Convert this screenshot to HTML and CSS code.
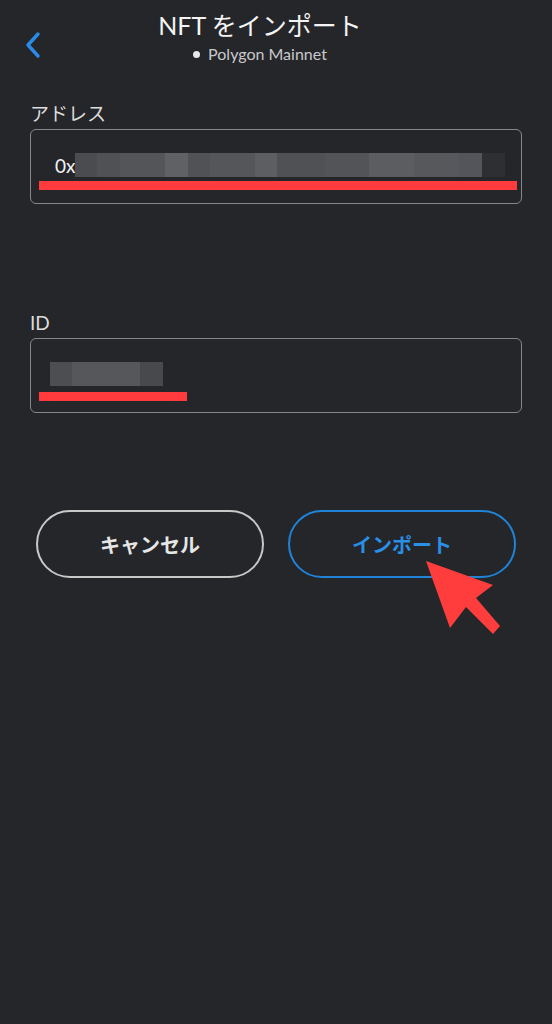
FILE: index.html
```html
<!DOCTYPE html>
<html lang="ja">
<head>
  <meta charset="UTF-8" />
  <meta name="viewport" content="width=device-width, initial-scale=1.0">
  <title>NFT をインポート</title>
  <link rel="stylesheet" href="styles.css">
</head>
<body>
  <header class="top-bar">
    <button class="back-btn" aria-label="戻る">
      <svg width="18" height="28" viewBox="0 0 18 28">
        <path d="M14 3 L4 14 L14 25" fill="none" stroke="#2a8ce8" stroke-width="3.4" stroke-linecap="round" stroke-linejoin="round"/>
      </svg>
    </button>
    <div class="title-block">
      <h1 class="title">NFT をインポート</h1>
      <div class="network"><span class="dot"></span>Polygon Mainnet</div>
    </div>
  </header>

  <main class="form">
    <div class="field">
      <label class="field-label">アドレス</label>
      <div class="field-box address-box">
        <div class="value-row">
          <span class="prefix">0x</span>
          <span class="blur blur-address"></span>
        </div>
        <div class="mark mark-address"></div>
      </div>
    </div>

    <div class="field field-id">
      <label class="field-label">ID</label>
      <div class="field-box id-box">
        <div class="value-row">
          <span class="blur blur-id"></span>
        </div>
        <div class="mark mark-id"></div>
      </div>
    </div>

    <div class="actions">
      <button class="btn btn-cancel">キャンセル</button>
      <div class="btn-wrap">
        <button class="btn btn-import">インポート</button>
        <svg class="pointer" width="80" height="80" viewBox="0 0 80 80">
          <path d="M1 1 L68 25 L51 38 L75 66 L68 74 L41 47 L25 68 Z" fill="#ff3d3d"/>
        </svg>
      </div>
    </div>
  </main>
</body>
</html>
```

FILE: styles.css
```css
body {
  margin: 0;
  background: #25262a;
  color: #fff;
  font-family: Lato, "Noto Sans CJK JP", sans-serif;
  min-height: 1024px;
}
.top-bar {
  position: relative;
  height: 80px;
  display: flex;
  justify-content: center;
  padding-right: 32px;
}
.back-btn {
  position: absolute;
  left: 24px;
  top: 31px;
  background: none;
  border: none;
  padding: 0;
  cursor: pointer;
}
.title-block {
  text-align: center;
  padding-top: 9px;
}
.title {
  margin: 0;
  font-size: 25px;
  font-weight: 400;
  line-height: 32px;
  color: #f4f4f4;
}
.network {
  font-size: 16px;
  color: #c9c9cb;
  line-height: 20px;
  margin-top: 3px;
  display: flex;
  align-items: center;
  justify-content: center;
  gap: 8px;
}
.dot {
  width: 7px;
  height: 7px;
  border-radius: 50%;
  background: #e8e8e8;
}
.form {
  padding: 20px 30px 0 30px;
}
.field-label {
  display: block;
  font-size: 19px;
  color: #dcdcdc;
  line-height: 28px;
  margin-bottom: 1px;
}
.field-box {
  border: 1.5px solid #86878b;
  border-radius: 6px;
  height: 75px;
  box-sizing: border-box;
  padding: 23px 4px 0 8px;
}
.value-row {
  display: flex;
  align-items: flex-end;
  height: 24px;
}
.prefix {
  font-size: 19px;
  color: #f2f2f2;
  margin-left: 16px;
  line-height: 22px;
}
.blur {
  display: block;
  height: 24px;
}
.blur-address {
  width: 430px;
  background: linear-gradient(to right,
    #4b4c50 0 22px, #505155 22px 45px, #545559 45px 90px,
    #606165 90px 113px, #515256 113px 135px, #55565a 135px 180px,
    #5d5e62 180px 202px, #505155 202px 250px, #535458 250px 294px,
    #5c5d61 294px 339px, #57585c 339px 384px, #54555a 384px 407px,
    #2e2f33 407px 430px);
}
.blur-id {
  width: 113px;
  margin-left: 11px;
  background: linear-gradient(to right,
    #4d4e52 0 22px, #56575b 22px 90px, #48494d 90px 113px);
}
.mark {
  height: 9px;
  background: #ff3b3e;
  margin-top: 4px;
}
.mark-address {
  width: 478px;
}
.mark-id {
  width: 148px;
  margin-top: 6px;
}
.field-id {
  margin-top: 105px;
}
.actions {
  display: flex;
  gap: 24px;
  margin-top: 97px;
  padding: 0 6px;
}
.btn {
  width: 228px;
  height: 68px;
  border-radius: 34px;
  background: transparent;
  font-family: Lato, "Noto Sans CJK JP", sans-serif;
  font-size: 20px;
  font-weight: 700;
  cursor: pointer;
}
.btn-cancel {
  border: 2px solid #c8c8c8;
  color: #e6e6e6;
}
.btn-import {
  border: 2px solid #1f84d8;
  color: #2a8fe6;
}
.btn-wrap {
  position: relative;
}
.pointer {
  position: absolute;
  left: 137px;
  top: 50px;
}
```
